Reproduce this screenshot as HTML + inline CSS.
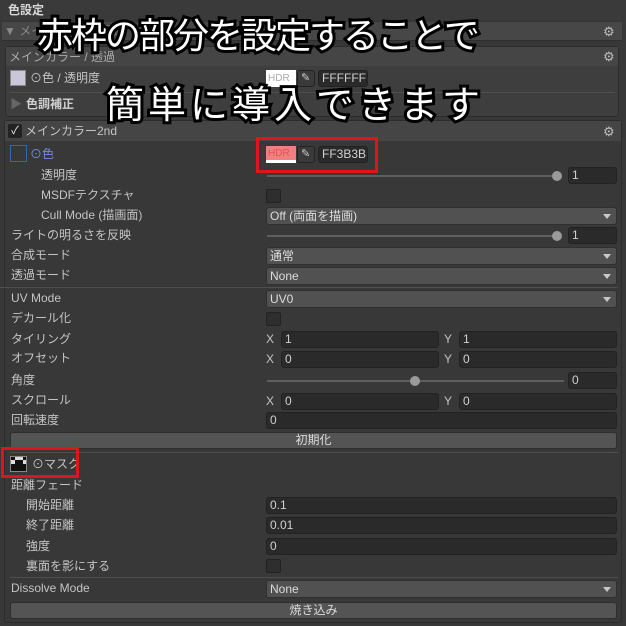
<!DOCTYPE html><html><head><meta charset="utf-8"><style>
*{margin:0;padding:0;box-sizing:border-box}
body{width:626px;height:626px;background:#383838;overflow:hidden;position:relative;font-family:"Liberation Sans","Noto Sans CJK JP",sans-serif;font-size:12px;color:#c4c4c4}
.a{position:absolute}
.l{position:absolute;line-height:20px;white-space:nowrap}
.f{position:absolute;height:17px;background:#2a2a2a;border:1px solid #222;border-radius:3px;line-height:15px;padding-left:3px;color:#d0d0d0}
.d{position:absolute;height:18px;background:#515151;border:1px solid #303030;border-radius:3px;line-height:16px;padding-left:3px;color:#dcdcdc;left:266px;width:351px}
.d:after{content:"";position:absolute;right:5px;top:6px;border:4px solid transparent;border-top:5px solid #c8c8c8;border-bottom:0}
.cb{position:absolute;left:266px;width:15px;height:14px;background:#2e2e2e;border:1px solid #222;border-radius:2px}
.sl{position:absolute;left:267px;width:290px;height:2px;background:#5e5e5e}
.kn{position:absolute;width:10px;height:10px;border-radius:5px;background:#9a9a9a}
.hr{position:absolute;left:8px;width:610px;height:1px;background:#4e4e4e}
.gear{position:absolute;left:603px;font-size:13px;color:#bdbdbd;line-height:14px}
.btn{position:absolute;left:10px;width:607px;height:17px;background:#545454;border:1px solid #2e2e2e;border-radius:3px;text-align:center;line-height:15px;color:#dcdcdc}
.red{position:absolute;border:3px solid #e0141c}
.ov{position:absolute;font-family:"Noto Sans CJK JP","WenQuanYi Zen Hei",sans-serif;font-weight:normal;color:#fff;-webkit-text-stroke:6px #000;paint-order:stroke fill;white-space:nowrap}
</style></head><body>
<div class="a" style="left:0;top:0;width:626px;height:20px;background:#3a3a3a"></div>
<div class="l" style="left:8px;top:0;font-weight:bold;color:#d8d8d8">色設定</div>
<div class="a" style="left:2px;top:22px;width:620px;height:19px;background:#474747;border-bottom:1px solid #2e2e2e"></div>
<div class="l" style="left:4px;top:21px;color:#888">▼ メインカラー / 透過</div>
<div class="gear" style="top:25px">⚙</div>
<div class="a" style="left:5px;top:46px;width:614px;height:71px;background:#3e3e3e;border:1px solid #2c2c2c;border-radius:3px"></div>
<div class="a" style="left:6px;top:47px;width:612px;height:19px;background:#454545"></div>
<div class="l" style="left:9px;top:47px;color:#aaa">メインカラー / 透過</div>
<div class="gear" style="top:50px">⚙</div>
<div class="a" style="left:10px;top:70px;width:16px;height:16px;background:#c8c8d8;border:1px solid #888"></div>
<div class="l" style="left:30px;top:68px">⊙色 / 透明度</div>
<div class="a" style="left:266px;top:70px;width:30px;height:17px;background:#fff;color:#aaa;font-size:10px;line-height:17px;padding-left:2px">HDR</div>
<div class="f" style="left:297px;top:70px;width:18px;background:#3a3a3a;color:#ccc;font-size:11px">✎</div>
<div class="f" style="left:318px;top:70px;width:50px">FFFFFF</div>
<div class="hr" style="top:92px;left:10px;width:605px"></div>
<div class="l" style="left:10px;top:94px;color:#666">▶</div>
<div class="l" style="left:26px;top:94px;font-weight:bold;color:#d0d0d0">色調補正</div>
<div class="a" style="left:4px;top:120px;width:618px;height:503px;border:1px solid #2c2c2c;border-radius:3px"></div>
<div class="a" style="left:5px;top:121px;width:616px;height:20px;background:#454545"></div>
<div class="a" style="left:8px;top:124px;width:14px;height:14px;background:#222;border-radius:2px;color:#eee;font-size:11px;line-height:14px;text-align:center">✓</div>
<div class="l" style="left:25px;top:121px">メインカラー2nd</div>
<div class="gear" style="top:125px">⚙</div>
<div class="a" style="left:10px;top:145px;width:17px;height:17px;border:1px solid #3c5fc0"></div>
<div class="l" style="left:30px;top:144px;color:#6f8fe0">⊙色</div>
<div class="a" style="left:266px;top:146px;width:30px;height:17px;background:#f08080;color:#d55;font-size:10px;line-height:15px;padding-left:2px;border-bottom:3px solid #fff">HDR</div>
<div class="f" style="left:297px;top:146px;width:18px;background:#3a3a3a;color:#ccc;font-size:11px">✎</div>
<div class="f" style="left:318px;top:146px;width:50px">FF3B3B</div>
<div class="red" style="left:256px;top:137px;width:122px;height:36px"></div>
<div class="l" style="left:41px;top:165px">透明度</div><div class="sl" style="top:175px"></div><div class="kn" style="left:552px;top:171px"></div><div class="f" style="left:568px;top:167px;width:49px">1</div>
<div class="l" style="left:41px;top:185px">MSDFテクスチャ</div><div class="cb" style="top:189px"></div>
<div class="l" style="left:41px;top:205px">Cull Mode (描画面)</div><div class="d" style="top:207px">Off (両面を描画)</div>
<div class="l" style="left:11px;top:225px">ライトの明るさを反映</div><div class="sl" style="top:235px"></div><div class="kn" style="left:552px;top:231px"></div><div class="f" style="left:568px;top:227px;width:49px">1</div>
<div class="l" style="left:11px;top:245px">合成モード</div><div class="d" style="top:247px">通常</div>
<div class="l" style="left:11px;top:265px">透過モード</div><div class="d" style="top:267px">None</div>
<div class="hr" style="top:287px;left:0;width:618px"></div>
<div class="l" style="left:11px;top:288px">UV Mode</div><div class="d" style="top:290px">UV0</div>
<div class="l" style="left:11px;top:308px">デカール化</div><div class="cb" style="top:312px"></div>
<div class="l" style="left:11px;top:329px">タイリング</div><div class="l" style="left:266px;top:329px">X</div><div class="f" style="left:281px;top:331px;width:158px">1</div><div class="l" style="left:444px;top:329px">Y</div><div class="f" style="left:459px;top:331px;width:158px">1</div>
<div class="l" style="left:11px;top:348px">オフセット</div><div class="l" style="left:266px;top:349px">X</div><div class="f" style="left:281px;top:351px;width:158px">0</div><div class="l" style="left:444px;top:349px">Y</div><div class="f" style="left:459px;top:351px;width:158px">0</div>
<div class="l" style="left:11px;top:370px">角度</div><div class="sl" style="top:380px;width:297px"></div><div class="kn" style="left:410px;top:376px"></div><div class="f" style="left:568px;top:372px;width:49px">0</div>
<div class="l" style="left:11px;top:390px">スクロール</div><div class="l" style="left:266px;top:391px">X</div><div class="f" style="left:281px;top:393px;width:158px">0</div><div class="l" style="left:444px;top:391px">Y</div><div class="f" style="left:459px;top:393px;width:158px">0</div>
<div class="l" style="left:11px;top:410px">回転速度</div><div class="f" style="left:266px;top:412px;width:351px">0</div>
<div class="btn" style="top:432px">初期化</div>
<div class="hr" style="top:452px;left:10px;width:608px"></div>
<div class="a" style="left:10px;top:456px;width:17px;height:16px;background:#111;border:1px solid #888;color:#ddd;font-size:8px;line-height:7px;overflow:hidden">▞▚▞▚▞▚</div>
<div class="l" style="left:32px;top:454px">⊙マスク</div>
<div class="red" style="left:1px;top:447px;width:78px;height:31px"></div>
<div class="l" style="left:11px;top:475px">距離フェード</div>
<div class="l" style="left:26px;top:495px">開始距離</div><div class="f" style="left:266px;top:497px;width:351px">0.1</div>
<div class="l" style="left:26px;top:515px">終了距離</div><div class="f" style="left:266px;top:517px;width:351px">0.01</div>
<div class="l" style="left:26px;top:536px">強度</div><div class="f" style="left:266px;top:538px;width:351px">0</div>
<div class="l" style="left:26px;top:556px">裏面を影にする</div><div class="cb" style="top:559px"></div>
<div class="hr" style="top:577px;left:10px;width:608px"></div>
<div class="l" style="left:11px;top:578px">Dissolve Mode</div><div class="d" style="top:580px">None</div>
<div class="btn" style="top:602px">焼き込み</div>
<div class="ov" style="left:37px;top:7px;font-size:36px;letter-spacing:-2px">赤枠の部分を設定することで</div>
<div class="ov" style="left:106px;top:74px;font-size:38px;letter-spacing:4px">簡単に導入できます</div>
</body></html>
